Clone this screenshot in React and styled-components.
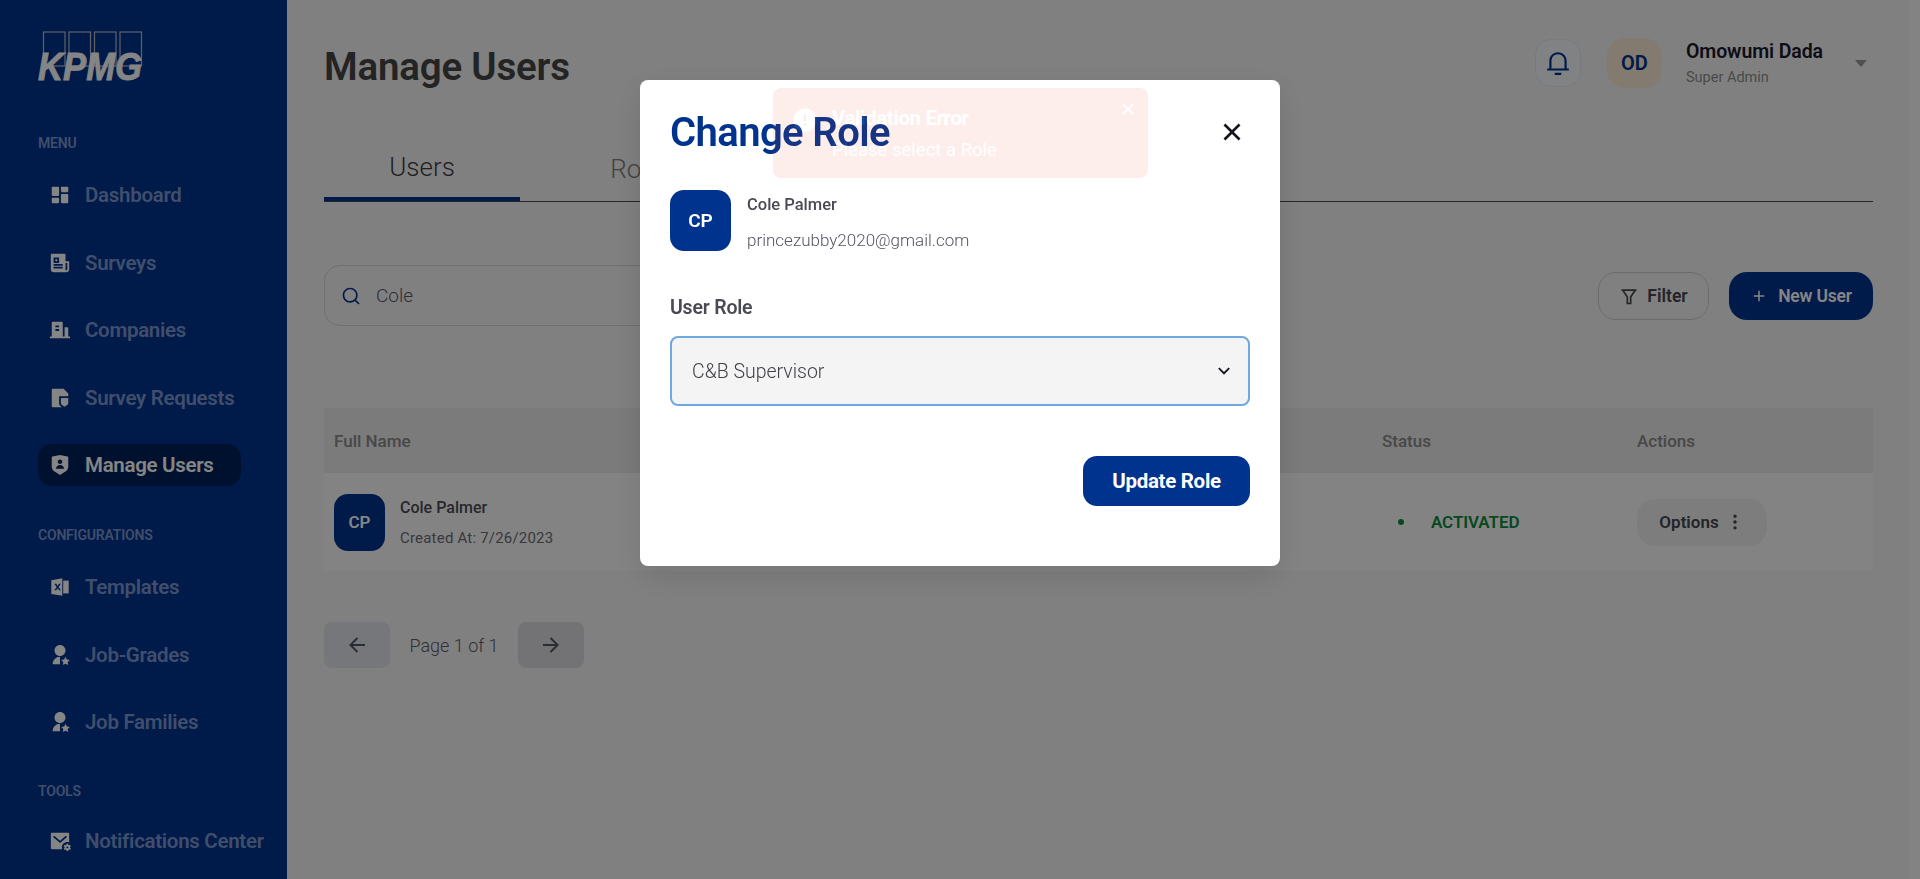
import React from "react";
import styled, { createGlobalStyle } from "styled-components";
import {
  RiDashboardFill,
  RiNewspaperFill,
  RiBuildingFill,
  RiFileShield2Fill,
  RiShieldUserFill,
  RiUserStarFill,
  RiMailSettingsFill,
  RiNotification3Line,
  RiSearchLine,
  RiFilterLine,
  RiAddLine,
  RiMore2Fill,
  RiArrowLeftLine,
  RiArrowRightLine,
  RiCloseLine,
  RiErrorWarningFill,
  RiArrowDownSLine,
} from "react-icons/ri";

const GlobalStyle = createGlobalStyle`
  html, body {
    margin: 0;
    padding: 0;
    height: 100%;
    overflow: hidden;
    font-family: Roboto, "Liberation Sans", sans-serif;
  }
`;

const Page = styled.div`
  display: flex;
  height: 879px;
  background: #f5f5f5;
`;

const Sidebar = styled.aside`
  width: 287px;
  flex-shrink: 0;
  background: #00338d;
  padding: 31px 0 0 38px;
  box-sizing: border-box;
  overflow: hidden;
`;

const Logo = styled.svg`
  display: block;
  width: 108px;
  height: 58px;
  margin-bottom: 46px;
  overflow: visible;
`;

const SectionLabel = styled.div`
  font-size: 14px;
  font-weight: 600;
  line-height: 16px;
  letter-spacing: -0.2px;
  color: #7c96cf;
  margin-top: ${(p) => p.$top || 0}px;
  margin-bottom: ${(p) => p.$bottom || 0}px;
`;

const NavItem = styled.div`
  display: flex;
  align-items: center;
  gap: 14px;
  width: 203px;
  height: 42px;
  padding-left: 11px;
  box-sizing: border-box;
  border-radius: 14px;
  margin-bottom: 25.5px;
  white-space: nowrap;
  font-size: 20.5px;
  font-weight: 600;
  letter-spacing: -0.3px;
  color: ${(p) => (p.$active ? "#ffffff" : "#7c96cf")};
  background: ${(p) => (p.$active ? "#00215d" : "transparent")};
  svg {
    color: #ffffff;
    flex-shrink: 0;
  }
`;

const Main = styled.main`
  flex: 1;
  min-width: 0;
  padding: 38px 37px 0;
`;

const Gutter = styled.div`
  width: 10px;
  flex-shrink: 0;
  background: #fbfbfb;
`;

const TopBar = styled.header`
  display: flex;
  align-items: center;
  height: 50px;
`;

const Title = styled.h1`
  margin: 6px auto 0 0;
  font-size: 38.5px;
  font-weight: 600;
  letter-spacing: -0.2px;
  color: #454545;
`;

const BellBox = styled.div`
  width: 46px;
  height: 48px;
  display: flex;
  align-items: center;
  justify-content: center;
  border-radius: 16px;
  border: 1px solid #e4ebf3;
  box-sizing: border-box;
  background: #f8f9fb;
  color: #00338d;
  margin-right: 26px;
`;

const UserBadge = styled.div`
  width: 55px;
  height: 50px;
  display: flex;
  align-items: center;
  justify-content: center;
  border-radius: 18px;
  background: #fbebd6;
  color: #00338d;
  font-size: 20px;
  font-weight: 600;
  margin-right: 25px;
`;

const UserText = styled.div`
  display: flex;
  flex-direction: column;
  width: 169px;
  margin-left: -1px;
`;

const UserName = styled.div`
  font-size: 19.5px;
  font-weight: 600;
  line-height: 24px;
  margin-top: 2px;
  letter-spacing: -0.1px;
  color: #1a1a2c;
`;

const UserRole = styled.div`
  font-size: 14.5px;
  line-height: 20px;
  margin-top: 4px;
  color: #8f8f8f;
`;

const Caret = styled.div`
  width: 0;
  height: 0;
  border-left: 6.5px solid transparent;
  border-right: 6.5px solid transparent;
  border-top: 7px solid #9a9a9a;
  margin-right: 6px;
`;

const Tabs = styled.nav`
  display: flex;
  gap: 24px;
  height: 61px;
  margin-top: 52px;
  border-bottom: 1px solid #4a4a4a;
`;

const Tab = styled.div`
  width: 196px;
  height: 61px;
  margin-bottom: -1px;
  display: flex;
  align-items: center;
  justify-content: center;
  box-sizing: border-box;
  padding-bottom: 4px;
  font-size: 26px;
  font-weight: 300;
  color: ${(p) => (p.$active ? "#3f3f46" : "#808080")};
  border-bottom: ${(p) => (p.$active ? "4px solid #00338d" : "none")};
`;

const Toolbar = styled.div`
  display: flex;
  align-items: center;
  height: 61px;
  margin-top: 63px;
`;

const SearchBox = styled.div`
  display: flex;
  align-items: center;
  gap: 15px;
  width: 700px;
  height: 61px;
  padding-left: 16px;
  margin-right: auto;
  box-sizing: border-box;
  border: 1px solid #d6d6d6;
  border-radius: 16px;
  color: #00338d;
  font-size: 19px;
  font-weight: 300;
  span {
    color: #5a5a68;
  }
`;

const FilterButton = styled.div`
  display: flex;
  align-items: center;
  justify-content: center;
  gap: 8px;
  width: 111px;
  height: 48px;
  box-sizing: border-box;
  border: 1px solid #cfcfcf;
  border-radius: 18px;
  margin-right: 20px;
  font-size: 17.5px;
  font-weight: 600;
  color: #45454f;
`;

const NewButton = styled.div`
  display: flex;
  align-items: center;
  justify-content: center;
  gap: 8px;
  width: 144px;
  height: 48px;
  border-radius: 18px;
  background: #00338d;
  color: #ffffff;
  font-size: 17.5px;
  font-weight: 600;
  letter-spacing: -0.2px;
  svg {
    margin-right: 2px;
  }
`;

const Table = styled.div`
  margin-top: 82px;
`;

const TableRow = styled.div`
  display: grid;
  grid-template-columns: 1fr 255px 236px;
  align-items: center;
  height: ${(p) => (p.$head ? "65px" : "98px")};
  background: ${(p) => (p.$head ? "#ebebeb" : "#fcfcfc")};
`;

const HeadCell = styled.div`
  font-size: 17px;
  font-weight: 500;
  color: #8a8a8a;
  padding-left: ${(p) => p.$left || 0}px;
`;

const NameCell = styled.div`
  display: flex;
  align-items: center;
  gap: 15px;
  padding-left: 10px;
`;

const Avatar = styled.div`
  width: ${(p) => p.$size}px;
  height: ${(p) => p.$height || p.$size}px;
  flex-shrink: 0;
  display: flex;
  align-items: center;
  justify-content: center;
  border-radius: 14px;
  background: #00338d;
  color: #ffffff;
  font-size: ${(p) => p.$font}px;
  font-weight: ${(p) => p.$weight || 600};
`;

const RowName = styled.div`
  font-size: 16px;
  font-weight: 500;
  color: #4c4c55;
  margin-bottom: 12px;
`;

const RowDate = styled.div`
  font-size: 15px;
  letter-spacing: 0.2px;
  color: #6d6d75;
`;

const StatusCell = styled.div`
  display: flex;
  align-items: center;
  gap: 27px;
  padding-left: 16px;
  font-size: 17px;
  font-weight: 600;
  letter-spacing: -0.1px;
  color: #0e8a3e;
  &::before {
    content: "";
    width: 6px;
    height: 6px;
    border-radius: 50%;
    background: #0e8a3e;
  }
`;

const OptionsButton = styled.div`
  display: flex;
  align-items: center;
  justify-content: center;
  gap: 6px;
  width: 130px;
  height: 47px;
  border-radius: 18px;
  background: #f0f0f0;
  color: #45454f;
  font-size: 17px;
  font-weight: 600;
`;

const Pager = styled.div`
  display: flex;
  align-items: center;
  margin-top: 51px;
`;

const PagerButton = styled.div`
  width: 66px;
  height: 46px;
  display: flex;
  align-items: center;
  justify-content: center;
  border-radius: 8px;
  background: ${(p) => (p.$enabled ? "#dcdde1" : "#e3e5ea")};
  color: #4f5668;
`;

const PagerText = styled.div`
  width: 128px;
  text-align: center;
  font-size: 18px;
  font-weight: 300;
  color: #5c5c66;
`;

const Overlay = styled.div`
  position: fixed;
  inset: 0;
  display: flex;
  justify-content: center;
  align-items: flex-start;
  padding-top: 80px;
  background: rgba(0, 0, 0, 0.48);
`;

const Modal = styled.div`
  position: relative;
  width: 640px;
  height: 486px;
  padding: 0 30px;
  box-sizing: border-box;
  background: #ffffff;
  border-radius: 8px;
  box-shadow: 0 10px 30px rgba(0, 0, 0, 0.12);
`;

const ModalHead = styled.div`
  display: flex;
  align-items: center;
  justify-content: space-between;
  height: 60px;
  padding-top: 22px;
`;

const ModalTitle = styled.h2`
  margin: 0;
  font-size: 40px;
  font-weight: 600;
  letter-spacing: -0.6px;
  color: #00338d;
`;

const CloseButton = styled.div`
  display: flex;
  color: #16161d;
  margin-right: 2px;
`;

const ModalUser = styled.div`
  display: flex;
  gap: 16px;
  margin-top: 28px;
`;

const ModalUserText = styled.div`
  display: flex;
  flex-direction: column;
  justify-content: space-between;
  padding: 5px 0 1px;
`;

const ModalUserName = styled.div`
  font-size: 16.5px;
  font-weight: 500;
  color: #4a4a55;
`;

const ModalUserMail = styled.div`
  font-size: 17px;
  font-weight: 300;
  color: #55555f;
`;

const FieldLabel = styled.label`
  display: block;
  margin-top: 45px;
  font-size: 19.5px;
  font-weight: 600;
  letter-spacing: -0.2px;
  line-height: 24px;
  color: #4a4a55;
`;

const SelectBox = styled.div`
  display: flex;
  align-items: center;
  justify-content: space-between;
  height: 70px;
  margin-top: 16px;
  padding: 0 13px 0 20px;
  box-sizing: border-box;
  background: #f4f4f4;
  border: 2px solid #6ea8e0;
  border-radius: 8px;
  font-size: 19.5px;
  font-weight: 300;
  color: #3f3f46;
  svg {
    color: #16161d;
  }
`;

const ModalFoot = styled.div`
  display: flex;
  justify-content: flex-end;
  margin-top: 50px;
`;

const UpdateButton = styled.div`
  width: 167px;
  height: 50px;
  display: flex;
  align-items: center;
  justify-content: center;
  border-radius: 14px;
  background: #00338d;
  color: #ffffff;
  font-size: 20.5px;
  font-weight: 700;
  letter-spacing: -0.3px;
`;

const Toast = styled.div`
  position: fixed;
  top: 88px;
  left: 773px;
  width: 375px;
  height: 90px;
  display: flex;
  gap: 13px;
  padding: 18px 20px 18px 18px;
  box-sizing: border-box;
  border-radius: 8px;
  background: #e1412d;
  color: #ffffff;
  opacity: 0.09;
`;

const ToastBody = styled.div`
  flex: 1;
`;

const ToastTitle = styled.div`
  font-size: 20.5px;
  font-weight: 700;
  line-height: 24px;
  letter-spacing: -0.4px;
`;

const ToastText = styled.div`
  font-size: 18.5px;
  line-height: 24px;
  margin-top: 8px;
`;

const ToastClose = styled.div`
  display: flex;
  margin: -8px -11px 0 0;
  height: 20px;
`;

const ExcelIcon = ({ size }) => (
  <svg width={size} height={size} viewBox="0 0 24 24" fill="currentColor">
    <path
      fillRule="evenodd"
      d="M2.5 4.5 14.5 2.5v19l-12-2zM5.8 8.4l2.6 3.6-2.6 3.6h2l1.6-2.3 1.6 2.3h2L10.4 12l2.6-3.6h-2L9.4 10.7 7.8 8.4z"
    />
    <path d="M15.5 5h6v14h-6z" />
  </svg>
);

const menu = [
  { label: "Dashboard", Icon: RiDashboardFill },
  { label: "Surveys", Icon: RiNewspaperFill },
  { label: "Companies", Icon: RiBuildingFill },
  { label: "Survey Requests", Icon: RiFileShield2Fill },
  { label: "Manage Users", Icon: RiShieldUserFill, active: true },
];

const configs = [
  { label: "Templates", Icon: ExcelIcon },
  { label: "Job-Grades", Icon: RiUserStarFill },
  { label: "Job Families", Icon: RiUserStarFill },
];

const NavList = ({ items }) =>
  items.map(({ label, Icon, active }) => (
    <NavItem key={label} $active={active}>
      <Icon size={22} />
      {label}
    </NavItem>
  ));

const App = () => {
  return (
    <>
      <GlobalStyle />
      <Page>
        <Sidebar>
          <Logo viewBox="0 0 108 58">
            <g fill="none" stroke="#b9bcc6" strokeWidth="1.2">
              <rect x="5.5" y="1" width="21.5" height="34" />
              <rect x="31" y="1" width="21.5" height="34" />
              <rect x="56.5" y="1" width="21.5" height="34" />
              <rect x="82" y="1" width="21.5" height="34" />
            </g>
            <text
              x="0"
              y="49"
              fill="#ffffff"
              stroke="#ffffff"
              strokeWidth="0.9"
              fontFamily="'Liberation Sans', sans-serif"
              fontSize="38"
              fontWeight="700"
              fontStyle="italic"
              textLength="104"
              lengthAdjust="spacingAndGlyphs"
            >
              KPMG
            </text>
          </Logo>
          <SectionLabel $bottom={23}>MENU</SectionLabel>
          <NavList items={menu} />
          <SectionLabel $top={41} $bottom={23}>CONFIGURATIONS</SectionLabel>
          <NavList items={configs} />
          <SectionLabel $top={40} $bottom={21}>TOOLS</SectionLabel>
          <NavItem>
            <RiMailSettingsFill size={22} />
            Notifications Center
          </NavItem>
        </Sidebar>

        <Main>
          <TopBar>
            <Title>Manage Users</Title>
            <BellBox>
              <RiNotification3Line size={26} />
            </BellBox>
            <UserBadge>OD</UserBadge>
            <UserText>
              <UserName>Omowumi Dada</UserName>
              <UserRole>Super Admin</UserRole>
            </UserText>
            <Caret />
          </TopBar>

          <Tabs>
            <Tab $active>Users</Tab>
            <Tab>Roles</Tab>
          </Tabs>

          <Toolbar>
            <SearchBox>
              <RiSearchLine size={20} />
              <span>Cole</span>
            </SearchBox>
            <FilterButton>
              <RiFilterLine size={20} />
              Filter
            </FilterButton>
            <NewButton>
              <RiAddLine size={18} />
              New User
            </NewButton>
          </Toolbar>

          <Table>
            <TableRow $head>
              <HeadCell $left={10}>Full Name</HeadCell>
              <HeadCell>Status</HeadCell>
              <HeadCell>Actions</HeadCell>
            </TableRow>
            <TableRow>
              <NameCell>
                <Avatar $size={51} $height={57} $font={17}>CP</Avatar>
                <div>
                  <RowName>Cole Palmer</RowName>
                  <RowDate>Created At: 7/26/2023</RowDate>
                </div>
              </NameCell>
              <StatusCell>ACTIVATED</StatusCell>
              <OptionsButton>
                Options
                <RiMore2Fill size={20} />
              </OptionsButton>
            </TableRow>
          </Table>

          <Pager>
            <PagerButton>
              <RiArrowLeftLine size={24} />
            </PagerButton>
            <PagerText>Page 1 of 1</PagerText>
            <PagerButton $enabled>
              <RiArrowRightLine size={24} />
            </PagerButton>
          </Pager>
        </Main>
        <Gutter />
      </Page>

      <Overlay>
        <Modal>
          <ModalHead>
            <ModalTitle>Change Role</ModalTitle>
            <CloseButton>
              <RiCloseLine size={32} />
            </CloseButton>
          </ModalHead>
          <ModalUser>
            <Avatar $size={61} $font={19}>CP</Avatar>
            <ModalUserText>
              <ModalUserName>Cole Palmer</ModalUserName>
              <ModalUserMail>princezubby2020@gmail.com</ModalUserMail>
            </ModalUserText>
          </ModalUser>
          <FieldLabel>User Role</FieldLabel>
          <SelectBox>
            C&amp;B Supervisor
            <RiArrowDownSLine size={22} />
          </SelectBox>
          <ModalFoot>
            <UpdateButton>Update Role</UpdateButton>
          </ModalFoot>
        </Modal>
      </Overlay>

      <Toast>
        <RiErrorWarningFill size={28} />
        <ToastBody>
          <ToastTitle>Validation Error</ToastTitle>
          <ToastText>Please select a Role</ToastText>
        </ToastBody>
        <ToastClose>
          <RiCloseLine size={22} />
        </ToastClose>
      </Toast>
    </>
  );
};

export default App;
